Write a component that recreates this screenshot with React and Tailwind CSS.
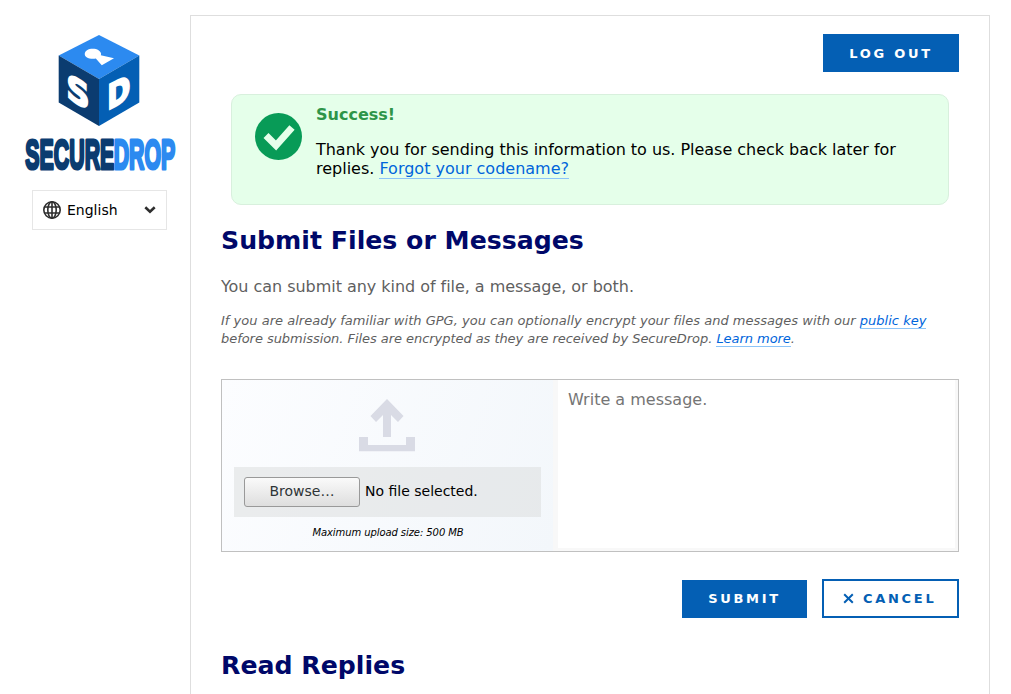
import React from 'react';

function Logo() {
  return (
    <svg width="152" height="138" viewBox="24 34 152 138" className="block overflow-visible" aria-label="SecureDrop">
      <polygon points="99,35 139.300,55.500 99,79 58.700,55.500" fill="#2c8af0" />
      <polygon points="58.700,55.500 99,79 99,126 58.700,102.500" fill="#0b3c70" />
      <polygon points="139.300,55.500 99,79 99,126 139.300,102.500" fill="#045fb4" />
      <path
        d="M87 50.200C90 48.300 95.500 48.300 98.500 50.200C100.800 51.600 101.600 53.600 100.800 55.200L114 58.200L101.800 65.200L95.800 58.600C92.500 59.300 88.700 58.600 86.600 57.200C84 55.400 84.200 52 87 50.200Z"
        fill="#fff"
      />
      <g fill="#fff" stroke="#fff" strokeWidth="2" fontFamily="DejaVu Sans, sans-serif" fontWeight="700" fontSize="34">
        <text transform="matrix(0.94 0.53 0 1 66.400 97.600)" x="0" y="0">S</text>
        <text transform="matrix(0.82 -0.44 0 1 107.300 110.600)" x="0" y="0">D</text>
      </g>
      <g fontFamily="Liberation Sans, sans-serif" fontWeight="700" fontSize="42" strokeWidth="3.200" strokeLinejoin="round">
        <text transform="translate(25.300 168.500) scale(0.5 1)" textLength="178" lengthAdjust="spacingAndGlyphs" fill="#0b3c70" stroke="#0b3c70">SECURE</text>
        <text transform="translate(113.700 168.500) scale(0.5 1)" textLength="123" lengthAdjust="spacingAndGlyphs" fill="#2c8af0" stroke="#2c8af0">DROP</text>
      </g>
    </svg>
  );
}

function Link({ children }) {
  return <a href="#" className="border-b border-[#8cc4f8] text-[#0065db]">{children}</a>;
}

export default function App() {
  return (
    <div className="flex h-[694px] w-[1011px] overflow-hidden bg-white font-['DejaVu_Sans',sans-serif] text-black">
      <aside className="w-[190px] shrink-0 pl-6 pt-[34px]">
        <Logo />
        <button className="ml-2 mt-[18px] flex h-10 w-[135px] items-center border border-[#e6e6e6] pl-[10px] pr-[10px] text-sm">
          <svg width="18" height="18" viewBox="0 0 18 18" fill="none" stroke="#2e2e2e" strokeWidth="1.600">
            <circle cx="9" cy="9" r="8.200" />
            <ellipse cx="9" cy="9" rx="4.200" ry="8.200" />
            <path d="M9 1v16M1.500 6h15M1.500 12h15" />
          </svg>
          <span className="ml-[6px]">English</span>
          <svg className="ml-auto" width="12" height="8" viewBox="0 0 12 8" fill="none" stroke="#2e2e2e" strokeWidth="2.600">
            <path d="M1.300 1.300L6 5.700L10.700 1.300" />
          </svg>
        </button>
      </aside>

      <main className="mt-[15px] h-[720px] w-[800px] shrink-0 border border-[#dedede] px-[30px] pt-[18px]">
        <div className="flex justify-end">
          <button className="h-[38px] w-[136px] bg-[#045fb4] pt-[2px] text-[13px] font-bold tracking-[2.7px] text-white">LOG OUT</button>
        </div>

        <section className="mx-[10px] mt-[22px] flex h-[111px] rounded-[10px] border border-[#d8f0dd] bg-[#e5ffea] pl-[23px] pt-[10px]">
          <svg className="mt-[7.500px] shrink-0" width="47" height="47" viewBox="0 0 47 47">
            <circle cx="23.500" cy="23.500" r="23.500" fill="#089b57" />
            <path d="M11 22.500L21 32.500L37 14.500" fill="none" stroke="#e5ffea" strokeWidth="7" />
          </svg>
          <div className="ml-[14px] w-[600px] text-base leading-[19px]">
            <h2 className="font-bold text-[#2e9549]">Success!</h2>
            <p className="mt-4 tracking-[-0.025px]">
              Thank you for sending this information to us. Please check back later for{' '}
              <br />
              <span className="tracking-normal">replies. <Link>Forgot your codename?</Link></span>
            </p>
          </div>
        </section>

        <h1 className="mt-[21px] text-[25.200px] font-bold leading-[30px] text-[#000869]">Submit Files or Messages</h1>
        <p className="mt-[21px] text-base leading-5 tracking-[-0.04px] text-[#5f5f5f]">You can submit any kind of file, a message, or both.</p>
        <p className="mt-[15px] whitespace-nowrap text-[13px] italic leading-[18px] text-[#5f5f5f]">
          <span className="tracking-[0.015px]">If you are already familiar with GPG, you can optionally encrypt your files and messages with our <Link>public key</Link></span>
          <br />
          <span className="tracking-[-0.05px]">before submission. Files are encrypted as they are received by SecureDrop. <Link>Learn more</Link>.</span>
        </p>

        <div className="mt-[31px] flex h-[173px] border border-[#c0c0c0] bg-[#f8f8f8]">
          <div className="flex w-[331px] flex-col bg-linear-[110deg,#fcfdff,#f3f7fb] pl-3">
            <svg className="ml-[125px] mt-[19px] shrink-0" width="56" height="53" viewBox="0 0 56 53" fill="#d9dbe5">
              <path d="M28 0L44.500 17L39 23L32 16V38H24V16L17 23L11.500 17Z" />
              <path d="M0 38H9V46H47V38H56V52.300H0Z" />
            </svg>
            <div className="mt-[15px] flex h-[50px] w-[307px] shrink-0 items-center bg-[#d9dbdc]/50 pl-[10px] text-sm">
              <button className="h-[30px] w-[116px] rounded-[3px] border border-[#999] bg-linear-to-b from-[#fafafa] to-[#dedede] pb-[2px] text-[#2e3436]">Browse…</button>
              <span className="ml-[5px] pb-[2px]">No file selected.</span>
            </div>
            <p className="mt-[9px] w-[308px] text-center text-[10px] italic leading-[14px] tracking-[-0.08px]">Maximum upload size: 500 MB</p>
          </div>
          <div className="w-[5px] bg-[#f8f8f8]" />
          <textarea className="h-[168px] w-[397px] resize-none bg-white px-[10px] py-[10px] text-base leading-[19px] placeholder:text-[#757575]" placeholder="Write a message." />
        </div>

        <div className="mt-[27px] flex items-end justify-end gap-[15px] text-[13px] font-bold tracking-[2.7px]">
          <button className="h-[38px] w-[125px] bg-[#045fb4] text-white">SUBMIT</button>
          <button className="flex h-[39px] w-[137px] items-center border-2 border-[#045fb4] pl-[19px] text-[#045fb4]">
            <svg className="mr-[9px]" width="11" height="11" viewBox="0 0 11 11" stroke="currentColor" strokeWidth="2">
              <path d="M1.200 1.200L9.800 9.800M9.800 1.200L1.200 9.800" />
            </svg>
            CANCEL
          </button>
        </div>
        <h1 className="mt-[33px] text-[25.200px] font-bold leading-[30px] text-[#000869]">Read Replies</h1>
      </main>
    </div>
  );
}
